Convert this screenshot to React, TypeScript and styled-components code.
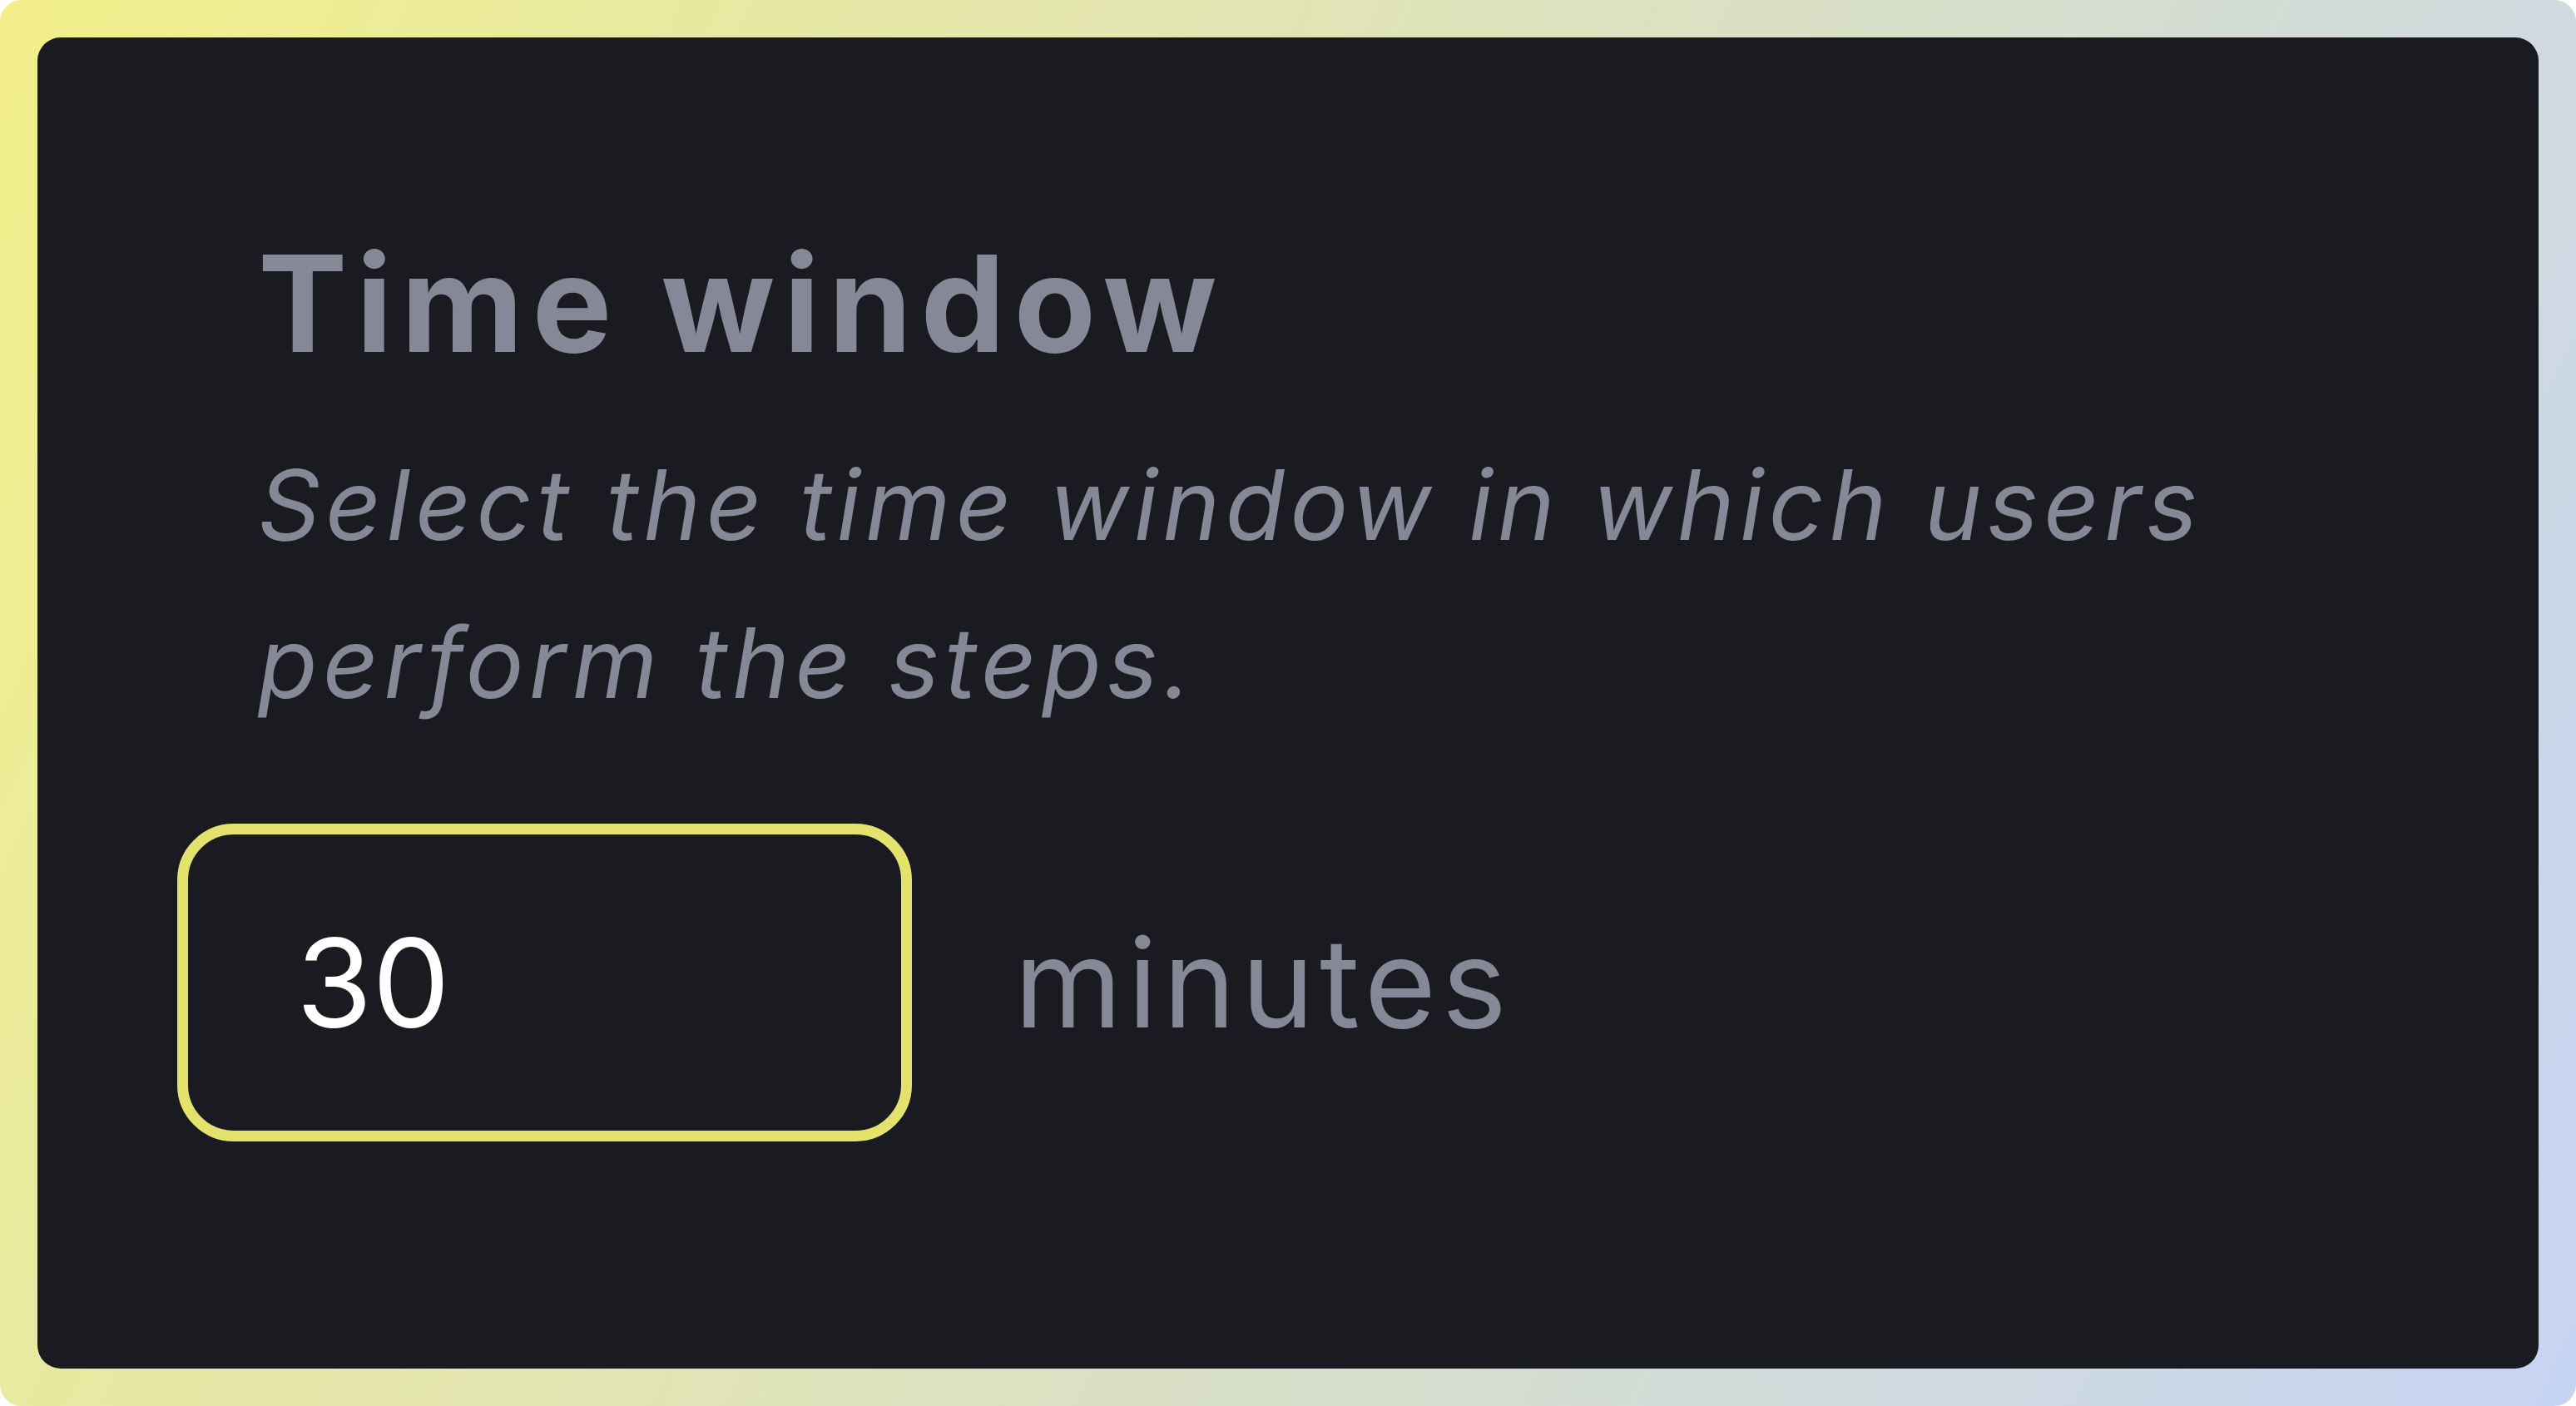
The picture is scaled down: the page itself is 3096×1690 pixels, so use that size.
import React, { useState } from 'react';
import styled, { createGlobalStyle } from 'styled-components';

const GlobalStyle = createGlobalStyle`
	html, body {
		margin: 0;
		padding: 0;
		background: #ffffff;
	}
	* {
		box-sizing: border-box;
	}
`;

const Frame = styled.div`
	width: 100vw;
	height: 100vh;
	padding: 45px;
	border-radius: 26px;
	background: linear-gradient(115deg, #f2ef8a 0%, #c6d4f4 100%);
	display: flex;
`;

const Panel = styled.section`
	flex: 1;
	display: flex;
	flex-direction: column;
	padding: 223px 271px 0 168px;
	border-radius: 28px;
	background: #1a1a21;
	color: #878897;
`;

const Header = styled.div`
	padding-left: 97px;
`;

const Title = styled.h2`
	margin: 0;
	font-family: Inter, 'Liberation Sans', sans-serif;
	font-weight: 650;
	font-size: 161px;
	line-height: 193px;
	letter-spacing: 0.065em;
	color: #878897;
`;

const Description = styled.p`
	margin: 51px 0 0;
	font-family: Inter, 'Liberation Sans', sans-serif;
	font-style: italic;
	font-weight: 400;
	font-size: 117px;
	line-height: 190px;
	letter-spacing: 0.052em;
	color: #878897;
`;

const Row = styled.div`
	display: flex;
	align-items: center;
	gap: 123px;
	margin-top: 98px;
`;

const NumberInput = styled.input`
	width: 883px;
	height: 382px;
	padding: 0 0 0 130px;
	border: 13px solid #e2e26c;
	border-radius: 68px;
	background: transparent;
	outline: none;
	color: #ffffff;
	font-family: Inter, 'Liberation Sans', sans-serif;
	font-size: 148px;
	font-weight: 400;
`;

const Unit = styled.span`
	font-family: Inter, 'Liberation Sans', sans-serif;
	font-size: 148px;
	font-weight: 400;
	letter-spacing: 0.045em;
	color: #878897;
`;

function App(): JSX.Element {
	const [minutes, setMinutes] = useState('30');

	return (
		<>
			<GlobalStyle />
			<Frame>
				<Panel>
					<Header>
						<Title>Time window</Title>
						<Description>
							Select the time window in which users perform the steps.
						</Description>
					</Header>
					<Row>
						<NumberInput
							value={minutes}
							onChange={(e) => setMinutes(e.target.value)}
						/>
						<Unit>minutes</Unit>
					</Row>
				</Panel>
			</Frame>
		</>
	);
}

export default App;
